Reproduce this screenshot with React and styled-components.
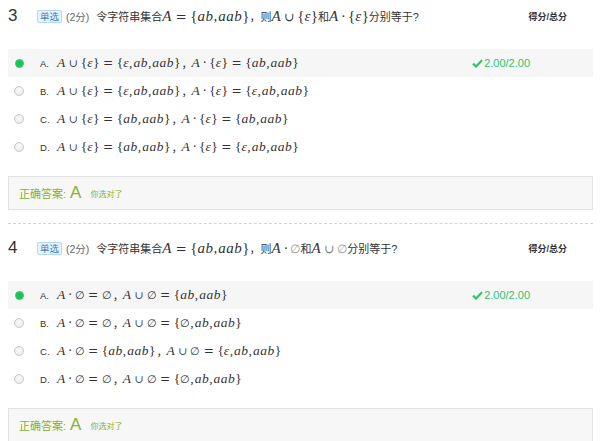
import React from "react";
import styled, { createGlobalStyle } from "styled-components";

const Global = createGlobalStyle`
  body {
    margin: 0;
    background: #fff;
    font-family: "Liberation Sans", "Noto Sans CJK SC", sans-serif;
    color: #333;
  }
`;

const questions = [
  {
    num: 3,
    stem: [
      "令字符串集合",
      "$A={ab,aab}",
      "，则",
      "$A∪{ε}",
      "和",
      "$A·{ε}",
      "分别等于?",
    ],
    options: [
      ["A", "A∪{ε}={ε,ab,aab}", "A·{ε}={ab,aab}"],
      ["B", "A∪{ε}={ε,ab,aab}", "A·{ε}={ε,ab,aab}"],
      ["C", "A∪{ε}={ab,aab}", "A·{ε}={ab,aab}"],
      ["D", "A∪{ε}={ab,aab}", "A·{ε}={ε,ab,aab}"],
    ],
  },
  {
    num: 4,
    stem: [
      "令字符串集合",
      "$A={ab,aab}",
      "，则",
      "$A·∅",
      "和",
      "$A∪∅",
      "分别等于?",
    ],
    options: [
      ["A", "A·∅=∅", "A∪∅={ab,aab}"],
      ["B", "A·∅=∅", "A∪∅={∅,ab,aab}"],
      ["C", "A·∅={ab,aab}", "A∪∅={ε,ab,aab}"],
      ["D", "A·∅=∅", "A∪∅={∅,ab,aab}"],
    ],
  },
];

const Page = styled.div`
  padding: 0 8px;
  width: 585px;
`;

const Question = styled.section`
  display: flex;
  flex-direction: column;
`;

const Head = styled.div`
  display: flex;
  align-items: center;
  height: 32px;
`;

const Num = styled.span`
  font-size: 17px;
  width: 29px;
  color: #333;
`;

const Badge = styled.span`
  font-size: 9.5px;
  line-height: 11px;
  padding: 0 2px;
  color: #3d7fb5;
  background: #e6f3fd;
  border: 1px solid #b3d8f3;
  border-radius: 2px;
  margin-right: 4px;
`;

const Points = styled.span`
  font-size: 10.5px;
  color: #666;
  margin-right: 7px;
`;

const Stem = styled.span`
  font-size: 11px;
  color: #333;
  display: flex;
  align-items: baseline;
  white-space: nowrap;
`;

const ScoreLabel = styled.span`
  margin-left: auto;
  margin-right: 26px;
  font-size: 9px;
  font-weight: bold;
  color: #333;
`;

const Options = styled.div`
  margin-top: 17px;
  display: flex;
  flex-direction: column;
`;

const Row = styled.div`
  display: flex;
  align-items: center;
  height: 28px;
  padding-left: 6px;
  background: ${(p) => (p.$selected ? "#f6f6f6" : "transparent")};
`;

const Radio = styled.span`
  width: ${(p) => (p.$checked ? "9px" : "10px")};
  height: ${(p) => (p.$checked ? "9px" : "10px")};
  margin-left: ${(p) => (p.$checked ? "1px" : "0")};
  margin-right: 16px;
  border-radius: 50%;
  box-sizing: border-box;
  background: ${(p) =>
    p.$checked ? "#1cc156" : "radial-gradient(circle at 50% 40%, #fafafa, #e6e6e6)"};
  border: 1px solid ${(p) => (p.$checked ? "#3ecb72" : "#c9c9c9")};
`;

const Letter = styled.span`
  font-size: 9.5px;
  color: #333;
  width: 17px;
`;

const Formula = styled.span`
  display: flex;
  align-items: baseline;
  font-size: 13.5px;
  white-space: nowrap;
`;

const Sep = styled.span`
  font-family: "Noto Sans CJK SC", sans-serif;
  font-size: 11px;
  width: 10px;
  margin-left: 1px;
`;

const Score = styled.span`
  margin-left: auto;
  margin-right: 63px;
  color: #2ec46e;
  font-size: 11px;
  display: flex;
  align-items: center;
  gap: 1px;
`;

const AnswerBox = styled.div`
  margin-top: 15px;
  height: 34px;
  box-sizing: border-box;
  border: 1px solid #e2e2e2;
  background: #f7f7f7;
  display: flex;
  align-items: center;
  padding-left: 10px;
  color: #88b02c;
`;

const AnswerLabel = styled.span`
  font-size: 11px;
`;

const AnswerLetter = styled.span`
  font-size: 17px;
  margin: 0 9px 0 4px;
`;

const AnswerNote = styled.span`
  font-size: 8px;
`;

const Divider = styled.hr`
  border: 0;
  border-top: 1px dashed #d4d4d4;
  margin: 13px 0 8px;
`;

const V = styled.i`
  font-family: "Liberation Serif", serif;
  font-style: italic;
  padding-right: 0.5px;
`;

const Up = styled.span`
  font-family: "Liberation Serif", serif;
  color: ${(p) => p.$tone || "inherit"};
`;

const Sym = styled.span`
  font-family: "DejaVu Serif", serif;
  font-size: ${(p) => p.$size || "1em"};
  margin: 0 ${(p) => p.$gap || 0}px;
  color: ${(p) => p.$tone || "inherit"};
`;

function Tex({ src, size, muted }) {
  const out = [];
  [...src].forEach((ch, i) => {
    if (/[a-zA-Zε]/.test(ch)) out.push(<V key={i}>{ch}</V>);
    else if (ch === "=") out.push(<Sym key={i} $gap={3.5} $size="0.9em">=</Sym>);
    else if (ch === "∪") out.push(<Sym key={i} $gap={3} $size="0.8em" $tone={muted ? "#777" : null}>∪</Sym>);
    else if (ch === "·") out.push(<Sym key={i} $gap={2.5} $size="0.9em">·</Sym>);
    else if (ch === "∅") out.push(<Sym key={i} $size="0.8em" $tone={muted ? "#999" : null}>∅</Sym>);
    else if (ch === ",") out.push(<Up key={i} style={{ marginRight: 1 }}>,</Up>);
    else out.push(<Up key={i}>{ch}</Up>);
  });
  return <Formula style={{ fontSize: size }}>{out}</Formula>;
}

function Check() {
  return (
    <svg width="11" height="9" viewBox="0 0 11 9">
      <path d="M1 4.6 L4 7.5 L10 1.2" stroke="#2ec46e" strokeWidth="2.2" fill="none" />
    </svg>
  );
}

function QuestionBlock({ q }) {
  return (
    <Question>
      <Head>
        <Num>{q.num}</Num>
        <Badge>单选</Badge>
        <Points>(2分)</Points>
        <Stem>
          {q.stem.map((s, i) =>
            s.startsWith("$") ? (
              <Tex key={i} src={s.slice(1)} size="15px" muted={q.num === 4 && i > 2} />
            ) : (
              <span key={i}>{s}</span>
            )
          )}
        </Stem>
        <ScoreLabel>得分/总分</ScoreLabel>
      </Head>
      <Options>
        {q.options.map(([letter, a, b], i) => (
          <Row key={letter} $selected={i === 0}>
            <Radio $checked={i === 0} />
            <Letter>{letter}.</Letter>
            <Tex src={a} />
            <Sep>，</Sep>
            <Tex src={b} />
            {i === 0 && (
              <Score>
                <Check />
                2.00/2.00
              </Score>
            )}
          </Row>
        ))}
      </Options>
      <AnswerBox>
        <AnswerLabel>正确答案:</AnswerLabel>
        <AnswerLetter>A</AnswerLetter>
        <AnswerNote>你选对了</AnswerNote>
      </AnswerBox>
    </Question>
  );
}

export default function App() {
  return (
    <Page>
      <Global />
      {questions.map((q, i) => (
        <React.Fragment key={q.num}>
          {i > 0 && <Divider />}
          <QuestionBlock q={q} />
        </React.Fragment>
      ))}
    </Page>
  );
}
